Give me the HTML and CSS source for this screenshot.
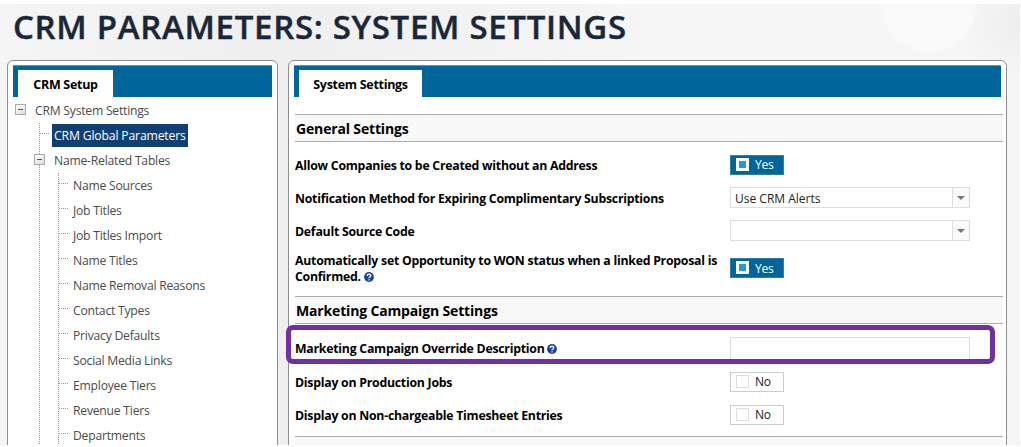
FILE: index.html
```
<!DOCTYPE html>
<html lang="en">
<head>
<meta charset="utf-8">
<title>CRM Parameters: System Settings</title>
<link rel="stylesheet" href="styles.css">
</head>
<body>
<div class="page">
  <h1 class="title"><span>CRM PARAMETERS: SYSTEM SETTINGS</span></h1>
  <div class="columns">
    <section class="panel nav">
      <div class="tabbar"><div class="tab tab-nav"><span>CRM Setup</span></div></div>
      <ul class="tree">
        <li><div class="node root"><i class="toggle"></i><span>CRM System Settings</span></div>
          <ul class="level one">
            <li class="node"><span class="selected">CRM Global Parameters</span></li>
            <li><div class="node parent"><i class="toggle"></i><span>Name-Related Tables</span></div>
              <ul class="level two">
                <li class="node"><span>Name Sources</span></li>
                <li class="node"><span>Job Titles</span></li>
                <li class="node"><span>Job Titles Import</span></li>
                <li class="node"><span>Name Titles</span></li>
                <li class="node"><span>Name Removal Reasons</span></li>
                <li class="node"><span>Contact Types</span></li>
                <li class="node"><span>Privacy Defaults</span></li>
                <li class="node"><span>Social Media Links</span></li>
                <li class="node"><span>Employee Tiers</span></li>
                <li class="node"><span>Revenue Tiers</span></li>
                <li class="node"><span>Departments</span></li>
              </ul>
            </li>
          </ul>
        </li>
      </ul>
    </section>
    <section class="panel main">
      <div class="tabbar"><div class="tab tab-main"><span>System Settings</span></div></div>
      <div class="settings">
        <h2 class="heading"><span>General Settings</span></h2>
        <div class="group general">
          <div class="row"><label><span>Allow Companies to be Created without an Address</span></label><div class="switch on"><i></i><span>Yes</span></div></div>
          <div class="row"><label><span>Notification Method for Expiring Complimentary Subscriptions</span></label><div class="select"><span>Use CRM Alerts</span><b></b></div></div>
          <div class="row"><label><span>Default Source Code</span></label><div class="select"><span></span><b></b></div></div>
          <div class="row tall"><label><span>Automatically set Opportunity to WON status when a linked Proposal is<br>Confirmed.</span> <svg class="help" viewBox="0 0 10 10"><circle cx="5" cy="5" r="4.9"/><path d="M3.2 3.9C3.2 1.7 6.8 1.7 6.8 3.8C6.8 5 5 4.9 5 6.2M5 7.2V8.4"/></svg></label><div class="switch on"><i></i><span>Yes</span></div></div>
        </div>
        <h2 class="heading"><span>Marketing Campaign Settings</span></h2>
        <div class="group campaign">
          <div class="row first"><label><span>Marketing Campaign Override Description</span> <svg class="help" viewBox="0 0 10 10"><circle cx="5" cy="5" r="4.9"/><path d="M3.2 3.9C3.2 1.7 6.8 1.7 6.8 3.8C6.8 5 5 4.9 5 6.2M5 7.2V8.4"/></svg></label><div class="textbox"></div></div>
          <div class="row"><label><span>Display on Production Jobs</span></label><div class="switch"><i></i><span>No</span></div></div>
          <div class="row"><label><span>Display on Non-chargeable Timesheet Entries</span></label><div class="switch"><i></i><span>No</span></div></div>
          <div class="highlight"></div>
        </div>
        <h2 class="heading"></h2>
      </div>
    </section>
  </div>
</div>
</body>
</html>
```
FILE: styles.css
```
* { box-sizing: border-box; }
body { margin: 0; background: #fff; font-family: "Open Sans", "Noto Sans", sans-serif; overflow: hidden; }
ul { list-style: none; margin: 0; padding: 0; }
.page {
  margin-top: 4px; width: 1020px; height: 441px; overflow: hidden;
  background:
    radial-gradient(circle 49px at 929px 0, #f9f9f9 93%, transparent 100%),
    radial-gradient(ellipse 60px 60px at 1020px 20px, #eee, transparent),
    linear-gradient(90deg, #f5f5f5, #efefef 27%, #f6f6f6 65%, #f6f6f6);
}
.title { margin: 0; height: 56px; padding-left: 13px; font-size: 33px; line-height: 46px; font-weight: 600; color: #1a2738; white-space: nowrap; letter-spacing: 0.69px; -webkit-text-stroke: 0.4px #1a2738; }
.columns { display: flex; gap: 10px; padding-left: 7px; align-items: flex-start; }
.panel { height: 420px; background: #fff; border: 1px solid #8e8e8e; border-radius: 6px; padding: 4px 5px 0; }
.nav { width: 271px; }
.main { width: 719px; }
.tabbar { height: 32px; background: #069; padding: 4px 0 0 5px; border-top: 1px solid #5998b8; }
.tab { height: 27px; padding-top: 1px; background: #fff; display: flex; align-items: center; justify-content: center; font-size: 12.5px; font-weight: 700; white-space: nowrap; letter-spacing: -0.3px; color: #000; }
.tab-nav { width: 95px; }
.tab-main { width: 123px; }
.tree { font-size: 12.2px; color: #4b4b4b; letter-spacing: -0.24px; padding: 1px 0 0 2px; }
.node { height: 25px; display: flex; align-items: center; white-space: nowrap; }
.root { gap: 9px; }
.level { padding-left: 19px; background: repeating-linear-gradient(180deg, #999 0 1px, transparent 1px 2px) 24px 0 / 1px 100% no-repeat; }
.level.two { padding-left: 39px; }
.level > .node::before { content: ""; width: 10px; margin-left: 6px; margin-right: 2px; height: 1px; background: repeating-linear-gradient(90deg, #999 0 1px, transparent 1px 2px); margin-top: -4px; }
.level.two > .node::before { margin-left: -14px; margin-right: 4px; }
.parent { gap: 9px; }
.toggle { width: 11px; height: 11px; margin-top: -3px; border: 1px solid #aaa; background: linear-gradient(#555, #555) 2px 4px / 5px 1px no-repeat, linear-gradient(135deg, #fff, #ddd); }
.selected { background: #103f71; color: #fff; height: 23px; line-height: 23px; padding: 0 2px; letter-spacing: -0.16px; }
.settings { padding-top: 17px; margin: 0 -2px 0 1px; }
.heading { margin: 0; height: 28px; padding-left: 1px; display: flex; align-items: center; background: #f8f8f8; border: solid #aaa; border-width: 1px 0; font-size: 14px; font-weight: 700; letter-spacing: -0.16px; white-space: nowrap; color: #000; }
.group { display: flex; flex-direction: column; position: relative; }
.general { padding: 6px 0 7px; }
.campaign { padding: 7px 0 5px; }
.row { height: 33px; display: flex; align-items: center; }
.row.first { height: 34px; }
.row.tall { height: 42px; }
.row label { width: 435px; flex: none; padding-top: 2px; font-size: 12.3px; line-height: 16px; font-weight: 700; color: #000; white-space: nowrap; letter-spacing: -0.25px; }
.help { width: 10px; height: 10px; vertical-align: -1px; }
.help circle { fill: #1740a0; }
.help path { fill: none; stroke: #fff; stroke-width: 1.3; }
.switch { width: 54px; height: 20px; border: 1px solid #ccc; display: flex; align-items: center; font-size: 12px; color: #222; gap: 6px; padding-left: 5px; letter-spacing: -0.2px; }
.switch i { width: 13px; height: 13px; margin-top: -1px; border: 1px solid #ddd; background: #fff; }
.switch.on { background: #069; border-color: #2e80a9; color: #fff; }
.switch.on i { background: #229bdc; border: 3px solid #fff; }
.select { width: 240px; height: 21px; border: 1px solid #ddd; display: flex; font-size: 12px; line-height: 21px; color: #222; }
.select span { flex: 1; padding-left: 4px; }
.select b { width: 17px; border-left: 1px solid #ddd; background: #fafafa; display: flex; align-items: center; justify-content: center; }
.select b::after { content: ""; border: solid transparent; border-width: 4px 4px 0; border-top-color: #777; }
.textbox { width: 240px; height: 23px; border: 1px solid #ddd; }
.highlight { position: absolute; left: -9px; top: 1px; width: 709px; height: 39px; border: 5px solid #7030a0; border-radius: 7px; }
```
